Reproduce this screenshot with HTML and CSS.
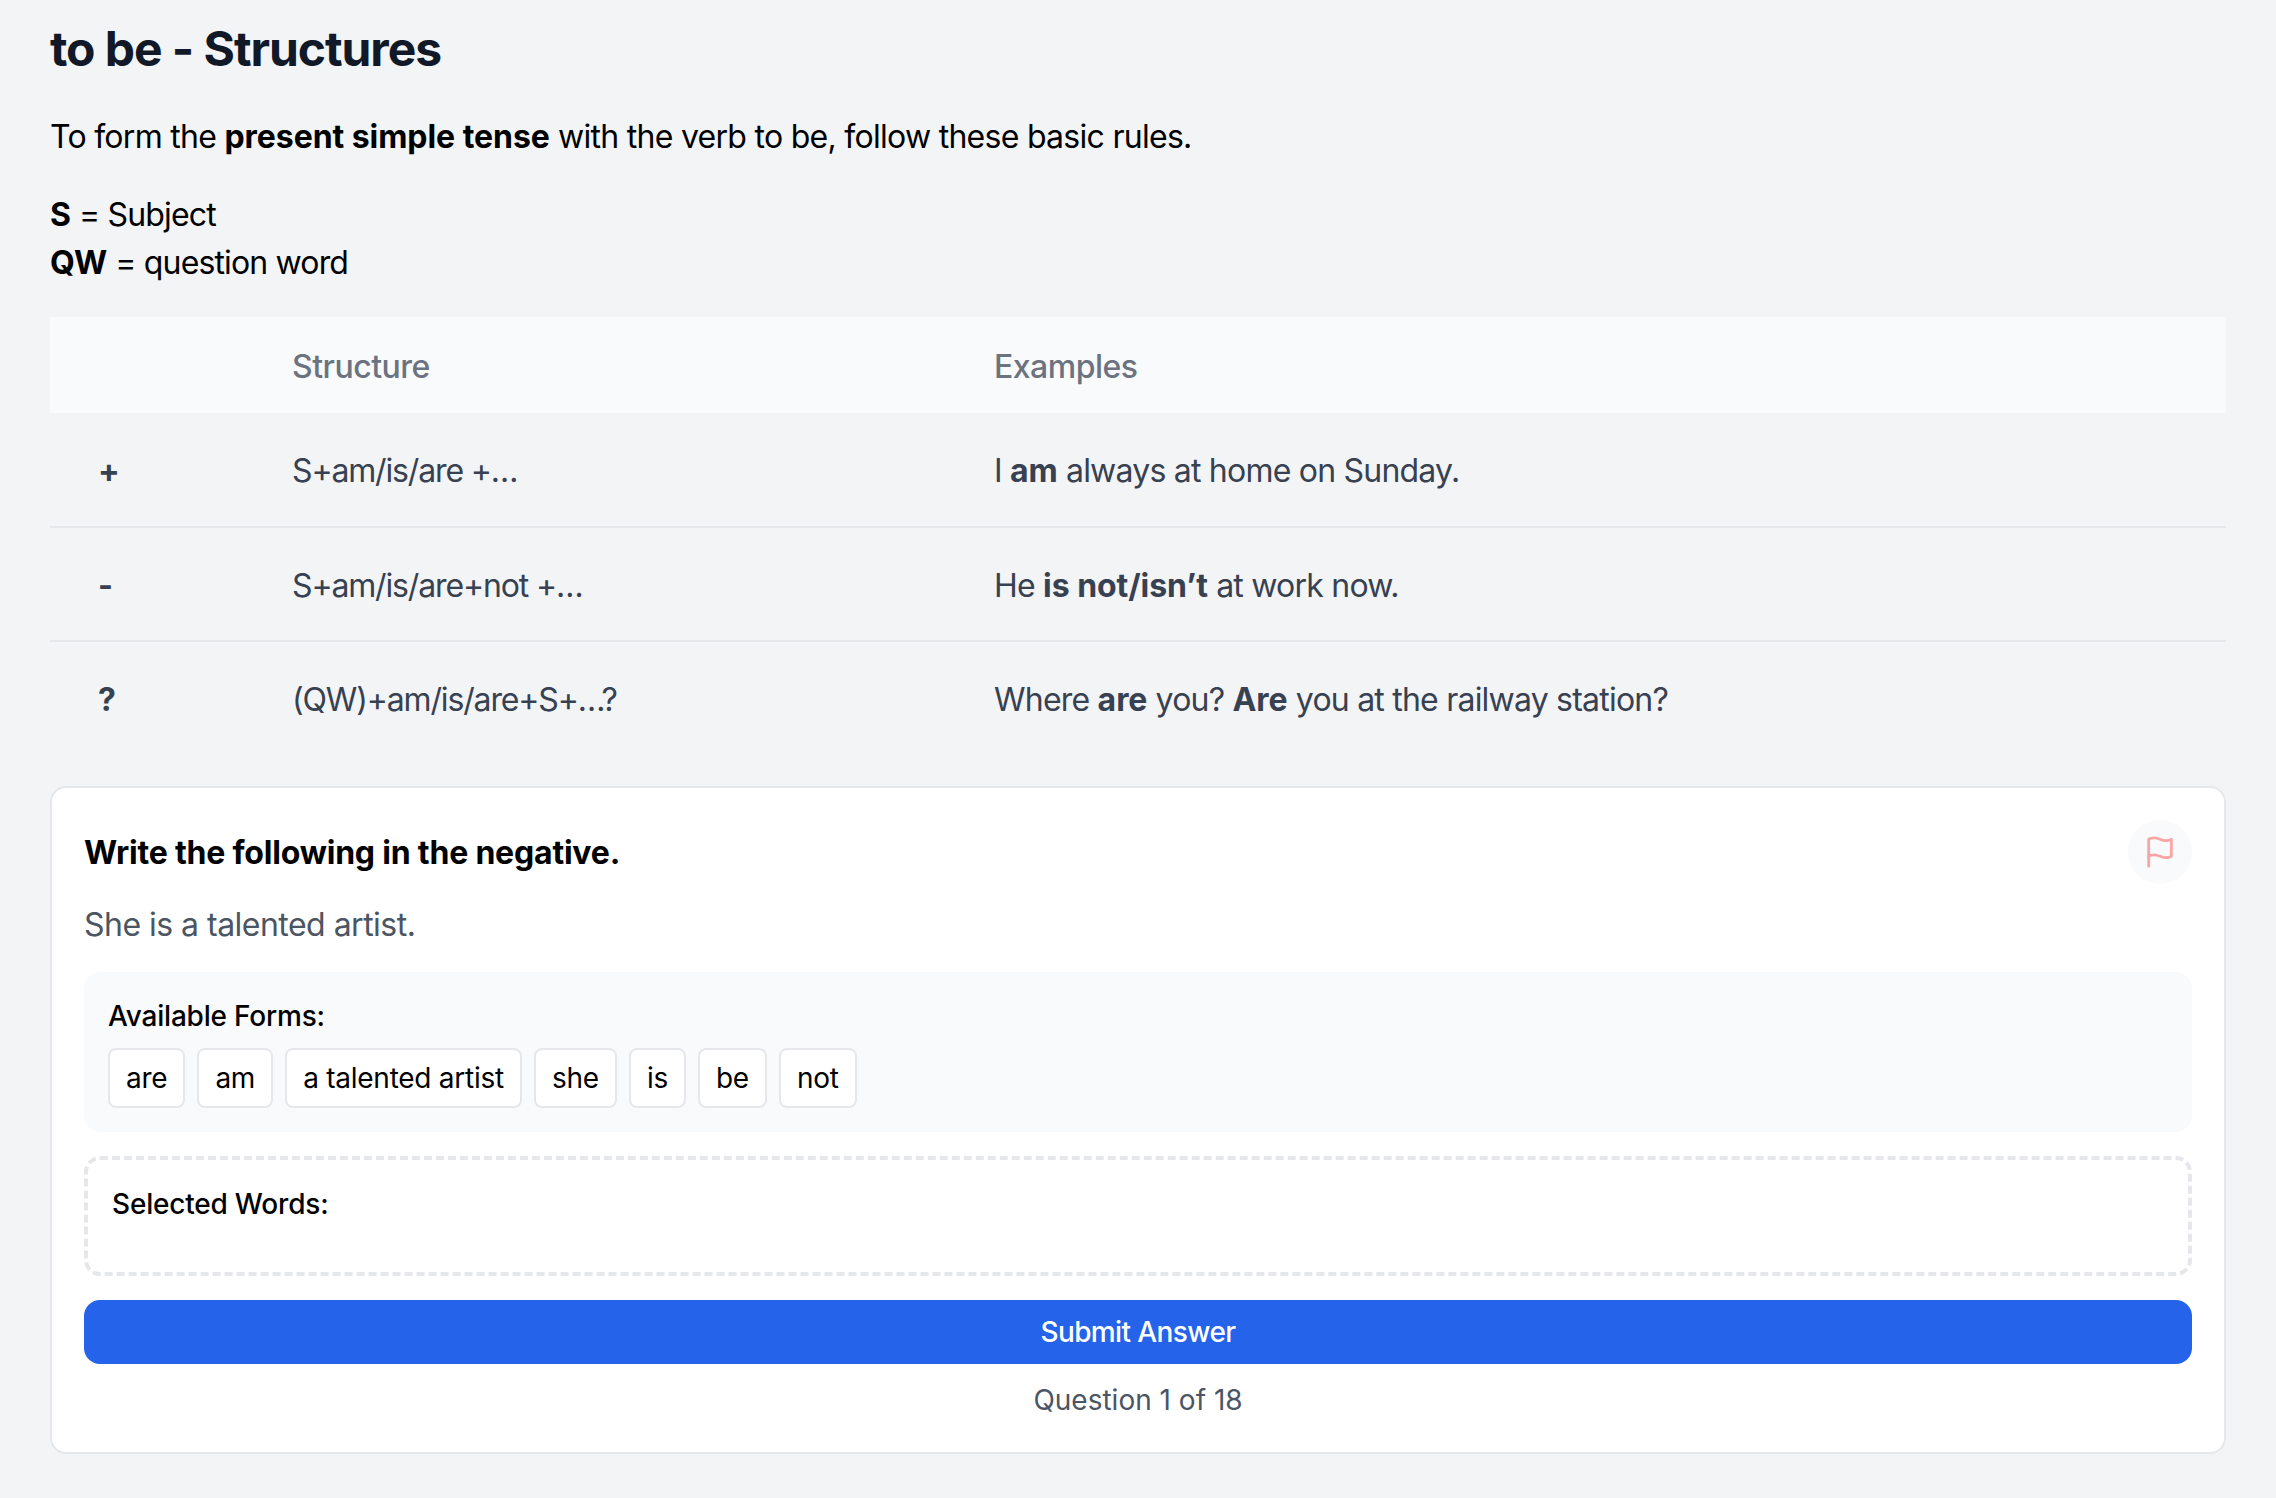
FILE: index.html
```html
<!DOCTYPE html>
<html lang="en">
<head>
<meta charset="utf-8">
<title>to be - Structures</title>
<link rel="stylesheet" href="styles.css">
</head>
<body>
<main class="page">
  <h1 class="title">to be - Structures</h1>
  <p class="intro">To form the <strong>present simple tense</strong> with the verb to be, follow these basic rules.</p>
  <p class="legend"><strong>S</strong> = Subject<br><strong>QW</strong> = question word</p>
  <table class="rules">
    <colgroup><col class="col-sign"><col class="col-structure"><col></colgroup>
    <thead>
      <tr><th></th><th>Structure</th><th>Examples</th></tr>
    </thead>
    <tbody>
      <tr><td class="sign">+</td><td class="formula">S+am/is/are +…</td><td>I <strong>am</strong> always at home on Sunday.</td></tr>
      <tr><td class="sign">-</td><td class="formula">S+am/is/are+not +…</td><td>He <strong>is not/isn’t</strong> at work now.</td></tr>
      <tr><td class="sign">?</td><td class="formula">(QW)+am/is/are+S+…?</td><td>Where <strong>are</strong> you? <strong>Are</strong> you at the railway station?</td></tr>
    </tbody>
  </table>
  <section class="card">
    <div class="card-head">
      <h2 class="prompt">Write the following in the negative.</h2>
      <button class="flag" type="button" aria-label="Flag question">
        <svg viewBox="0 0 24 24" width="34" height="34" fill="none" stroke="currentColor" stroke-width="2" stroke-linecap="round" stroke-linejoin="round"><path d="M4 15s1-1 4-1 5 2 8 2 4-1 4-1V3s-1 1-4 1-5-2-8-2-4 1-4 1z"/><path d="M4 22v-7"/></svg>
      </button>
    </div>
    <p class="sentence">She is a talented artist.</p>
    <div class="forms">
      <div class="label">Available Forms:</div>
      <div class="chips">
        <button class="chip" type="button">are</button>
        <button class="chip" type="button">am</button>
        <button class="chip" type="button">a talented artist</button>
        <button class="chip" type="button">she</button>
        <button class="chip" type="button">is</button>
        <button class="chip" type="button">be</button>
        <button class="chip" type="button">not</button>
      </div>
    </div>
    <div class="selected">
      <div class="label">Selected Words:</div>
    </div>
    <button class="submit" type="button">Submit Answer</button>
    <p class="progress">Question 1 of 18</p>
  </section>
</main>
</body>
</html>
```
FILE: styles.css
```css
* { box-sizing: border-box; }
html, body { margin: 0; padding: 0; }
body {
  background: #f3f4f6;
  color: #000;
  font-family: Inter, "Liberation Sans", sans-serif;
  font-size: 32px;
}
.page { padding: 16px 50px 45px; }
.title {
  margin: 0;
  height: 66px;
  line-height: 66px;
  font-size: 48px;
  font-weight: 700;
  letter-spacing: -1.05px;
  color: #111827;
}
.intro {
  margin: 31px 0 0;
  font-size: 32px;
  line-height: 48px;
  letter-spacing: -0.72px;
}
.legend {
  margin: 30px 0 0;
  font-size: 32px;
  line-height: 48px;
  letter-spacing: -0.85px;
}
strong { font-weight: 700; letter-spacing: -0.05px; }
.rules {
  margin-top: 30px;
  width: 100%;
  border-collapse: collapse;
  table-layout: fixed;
  font-size: 32px;
  letter-spacing: -0.78px;
  color: #374151;
}
.col-sign { width: 194px; }
.col-structure { width: 702px; }
.rules th {
  height: 96px;
  padding: 2px 48px 0;
  background: #f9fafb;
  color: #6b7280;
  font-weight: 500;
  letter-spacing: -0.5px;
  text-align: left;
}
.rules td {
  height: 114px;
  padding: 2px 48px 0;
  border-bottom: 2px solid #e5e7eb;
}
.rules tr:last-child td { border-bottom: 0; }
.rules .sign { font-weight: 700; }
.rules .formula { letter-spacing: -1.15px; }
.card {
  margin-top: 31px;
  padding: 32px;
  background: #fff;
  border: 2px solid #e5e7eb;
  border-radius: 16px;
}
.card-head {
  display: flex;
  align-items: center;
  justify-content: space-between;
}
.prompt {
  margin: 0;
  font-size: 32px;
  font-weight: 700;
  letter-spacing: -0.2px;
}
.flag {
  display: flex;
  align-items: center;
  justify-content: center;
  width: 64px;
  height: 64px;
  padding: 0;
  border: 0;
  border-radius: 50%;
  background: #f9fafb;
  color: #fca5a5;
}
.sentence {
  margin: 17px 0 0;
  font-size: 32px;
  line-height: 48px;
  letter-spacing: -0.52px;
  color: #4b5563;
}
.forms {
  margin-top: 23px;
  padding: 24px;
  background: #f9fafb;
  border-radius: 16px;
}
.label {
  font-size: 28px;
  line-height: 40px;
  font-weight: 500;
  letter-spacing: -0.2px;
}
.chips {
  display: flex;
  flex-wrap: wrap;
  gap: 12px;
  margin-top: 12px;
}
.chip {
  height: 60px;
  padding: 0 16px;
  background: #fff;
  border: 2px solid #e5e7eb;
  border-radius: 8px;
  font: inherit;
  font-size: 28px;
  letter-spacing: -0.25px;
  color: #000;
}
.selected {
  margin-top: 24px;
  height: 120px;
  padding: 24px;
  border: 4px dashed #e5e7eb;
  border-radius: 16px;
}
.submit {
  display: block;
  width: 100%;
  height: 64px;
  margin-top: 24px;
  border: 0;
  border-radius: 16px;
  background: #2563eb;
  color: #fff;
  font: inherit;
  font-size: 28px;
  font-weight: 500;
  letter-spacing: -0.6px;
}
.progress {
  margin: 16px 0 0;
  text-align: center;
  font-size: 28px;
  line-height: 40px;
  color: #4b5563;
}
```
